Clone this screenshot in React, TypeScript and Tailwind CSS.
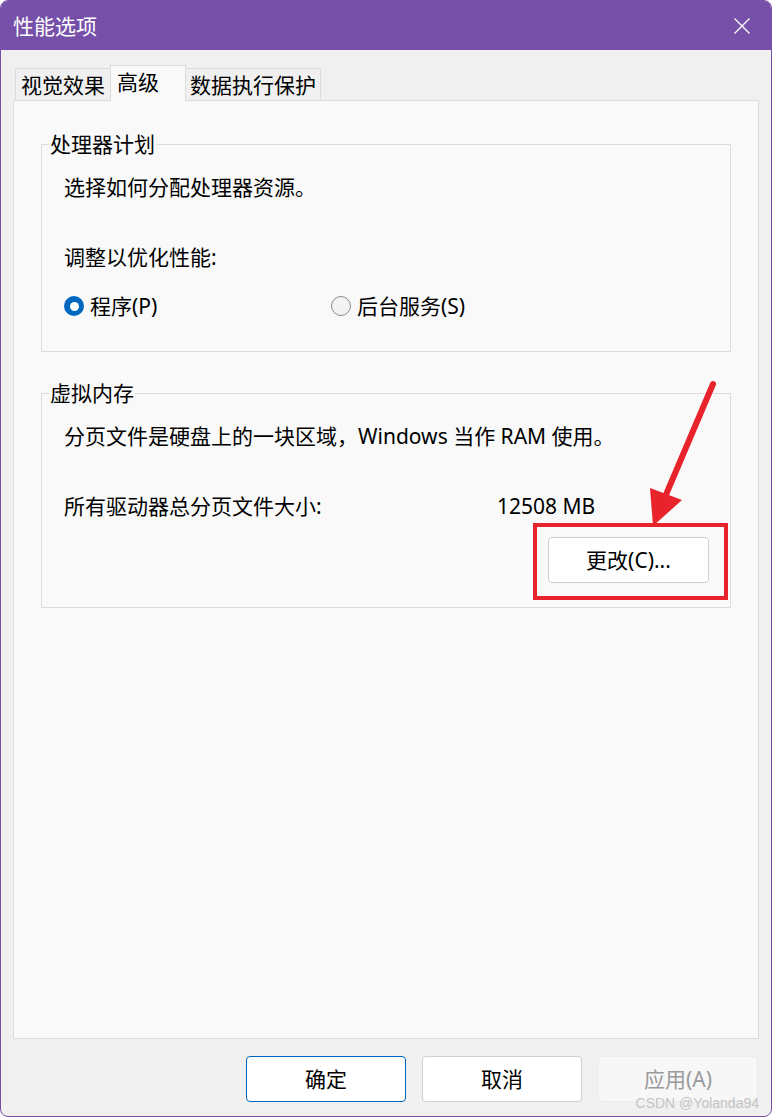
import React from "react";

const FONT = `font-['Noto_Sans','Noto_Sans_CJK_SC',sans-serif]`;

function Radio({ checked, label }: { checked?: boolean; label: string }) {
  return (
    <div className="flex items-center gap-[6px]">
      {checked ? (
        <span className="flex h-[20px] w-[20px] items-center justify-center rounded-full bg-[#0067c0]">
          <span className="h-[9px] w-[9px] rounded-full bg-white" />
        </span>
      ) : (
        <span className="h-[20px] w-[20px] rounded-full border border-[#8a8a8a] bg-[#f3f3f3]" />
      )}
      <span>{label}</span>
    </div>
  );
}

function Group({
  title,
  children,
  className = "",
}: {
  title: string;
  children: React.ReactNode;
  className?: string;
}) {
  return (
    <fieldset
      className={`mx-[27px] border border-[#dcdcdc] pl-[22px] pr-[21px] ${className}`}
    >
      <legend className="-ml-[15px] px-[1px] leading-[24px]">{title}</legend>
      {children}
    </fieldset>
  );
}

function FooterButton({
  children,
  variant,
}: {
  children: React.ReactNode;
  variant: "primary" | "normal" | "disabled";
}) {
  const styles = {
    primary: "border-[#0067c0] bg-white text-black",
    normal: "border-[#d0d0d0] bg-white text-black",
    disabled: "border-[#ececec] bg-[#f7f7f7] text-[#9a9a9a]",
  }[variant];
  return (
    <button
      className={`flex h-[46px] w-[160px] items-center justify-center rounded-[4px] border ${styles}`}
    >
      {children}
    </button>
  );
}

export default function App() {
  return (
    <div
      className={`${FONT} relative flex h-[1117px] w-[772px] flex-col overflow-hidden rounded-[8px] border border-[#7550a8] bg-[#f0f0f0] text-[21px] leading-[24px] text-black`}
    >
      {/* title bar */}
      <div className="flex h-[49px] shrink-0 items-center justify-between bg-[#754fa8] pl-[12px] pr-[21px] text-white">
        <span>性能选项</span>
        <svg width="16" height="16" viewBox="0 0 16 16">
          <path d="M0.5 0.5 L15.5 15.5 M15.5 0.5 L0.5 15.5" stroke="white" strokeWidth="1.3" />
        </svg>
      </div>

      <div className="flex flex-1 flex-col px-[12px] pt-[15px]">
        {/* tabs */}
        <div className="flex h-[35px] items-end pl-[2px]">
          <div className="flex h-[32px] items-center border border-b-0 border-[#dcdcdc] px-[5px]">
            视觉效果
          </div>
          <div className="relative z-10 -mb-px -ml-px flex h-[36px] w-[76px] items-start border border-b-0 border-[#dcdcdc] bg-[#f9f9f9] pl-[6px] pt-[4px]">
            高级
          </div>
          <div className="-ml-px flex h-[32px] items-center border border-b-0 border-[#dcdcdc] px-[4px]">
            数据执行保护
          </div>
        </div>

        {/* tab page */}
        <div className="flex h-[939px] flex-col border border-[#dcdcdc] bg-[#f9f9f9] pt-[31px]">
          <Group title="处理器计划" className="pb-[33px]">
            <div className="mt-[19px]">选择如何分配处理器资源。</div>
            <div className="mt-[46px]">调整以优化性能:</div>
            <div className="mt-[25px] grid grid-cols-[267px_1fr]">
              <Radio checked label="程序(P)" />
              <Radio label="后台服务(S)" />
            </div>
          </Group>

          <Group title="虚拟内存" className="mt-[29px] pb-[24px]">
            <div className="mt-[19px]">分页文件是硬盘上的一块区域，Windows 当作 RAM 使用。</div>
            <div className="mt-[46px] grid grid-cols-[433px_1fr]">
              <span>所有驱动器总分页文件大小:</span>
              <span>12508 MB</span>
            </div>
            <div className="mt-[19px] flex justify-end">
              <button className="flex h-[46px] w-[161px] items-center justify-center rounded-[4px] border border-[#d0d0d0] bg-white">
                更改(C)...
              </button>
            </div>
          </Group>
        </div>

        {/* dialog buttons */}
        <div className="mt-[17px] flex justify-end gap-[16px] pr-[1px]">
          <FooterButton variant="primary">确定</FooterButton>
          <FooterButton variant="normal">取消</FooterButton>
          <FooterButton variant="disabled">应用(A)</FooterButton>
        </div>
      </div>

      {/* red callout around the change button */}
      <div className="pointer-events-none absolute left-[532px] top-[522px] h-[77px] w-[195px] border-[4px] border-[#e8232b]" />
      <svg
        className="pointer-events-none absolute left-0 top-0"
        width="772"
        height="1117"
        viewBox="0 0 772 1117"
      >
        <line x1="712" y1="383" x2="664" y2="496" stroke="#e8232b" strokeWidth="6" strokeLinecap="round" />
        <polygon points="649,487 652,525 681,499" fill="#e8232b" />
      </svg>

      <span className="pointer-events-none absolute right-[12px] top-[1093px] font-['Liberation_Sans',sans-serif] text-[14px] leading-[18px] text-[#c4c4c4]">
        CSDN @Yolanda94
      </span>
    </div>
  );
}
